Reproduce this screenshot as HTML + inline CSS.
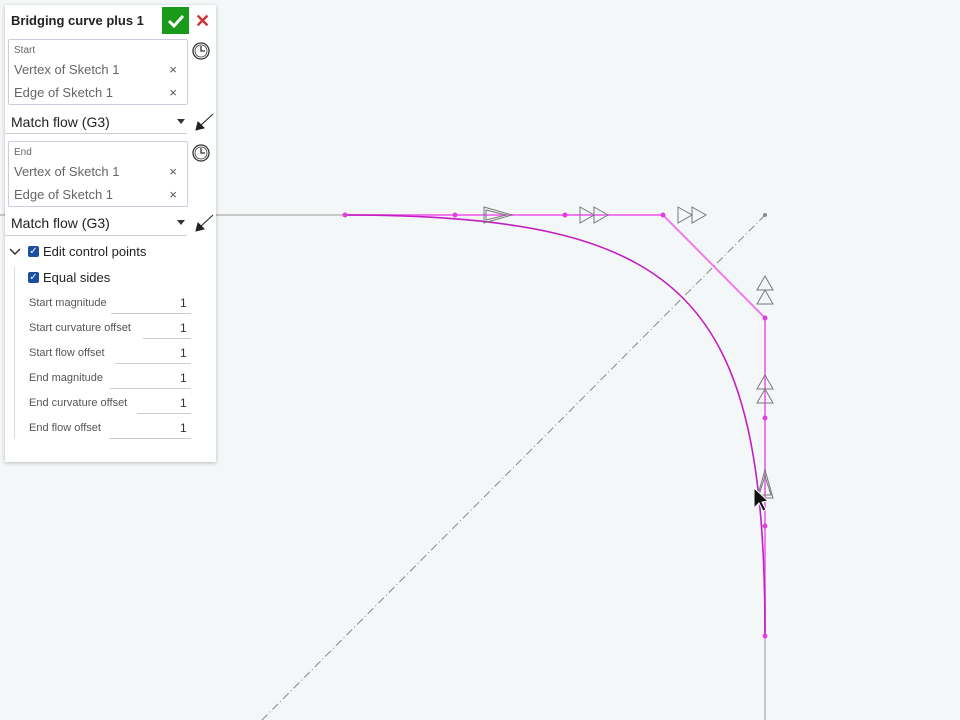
<!DOCTYPE html>
<html><head><style>
body{margin:0;width:960px;height:720px;background:#f4f7f8;font-family:"Liberation Sans",sans-serif;position:relative;overflow:hidden}
svg.bg{position:absolute;left:0;top:0}
.panel{position:absolute;left:5px;top:5px;width:211px;height:457px;background:#fff;box-shadow:0 1px 4px rgba(0,0,0,.25)}
.abs{position:absolute}
.t{font-size:13px;color:#222}
.g{color:#666}
.box{position:absolute;left:3px;width:178px;border:1px solid #ccd;border-radius:2px}
.x{position:absolute;right:10px;font-size:13px;color:#555}
.ul{position:absolute;border-bottom:1px solid #ccc}
.cb{position:absolute;width:11px;height:11px;background:#1b4fa0;border-radius:2px;color:#fff;font-size:10px;line-height:11px;text-align:center}
.lab{position:absolute;left:24px;font-size:11px;color:#555}
.val{position:absolute;font-size:12px;color:#333}
</style></head><body>
<svg class="bg" width="960" height="720">
<line x1="0" y1="215" x2="345" y2="215" stroke="#999" stroke-width="1"/>
<line x1="765" y1="636" x2="765" y2="720" stroke="#999"/>
<line x1="765" y1="215" x2="262" y2="720" stroke="#888" stroke-dasharray="8,3,1,3"/>
<circle cx="765" cy="215" r="2" fill="#888"/>
<polyline points="345,215 663,215 765,318 765,636" fill="none" stroke="#f27af0" stroke-width="2"/>
<path d="M345,215 C690,215 765,300 765,636" fill="none" stroke="#c21fc2" stroke-width="1.6"/>
<g fill="#e040e0"><circle cx="345" cy="215" r="2.5"/><circle cx="455" cy="215" r="2.5"/><circle cx="565" cy="215" r="2.5"/><circle cx="663" cy="215" r="2.5"/><circle cx="765" cy="318" r="2.5"/><circle cx="765" cy="418" r="2.5"/><circle cx="765" cy="526" r="2.5"/><circle cx="765" cy="636" r="2.5"/></g>
<g fill="none" stroke="#777" stroke-width="1">
<path d="M484,207 L512,215 L484,223Z M486,210 L506,215 L486,220Z"/>
<path d="M580,207 L594,215 L580,223Z M594,207 L608,215 L594,223Z"/>
<path d="M678,207 L692,215 L678,223Z M692,207 L706,215 L692,223Z"/>
<path d="M757,290 L765,276 L773,290Z M757,304 L765,290 L773,304Z"/>
<path d="M757,389 L765,375 L773,389Z M757,403 L765,389 L773,403Z"/>
<path d="M757,498 L765,470 L773,498Z M759,495 L765,476 L771,495Z"/>
</g>
<path d="M754,488 L754,508 L759,503 L763,511 L766,510 L762,502 L768,501Z" fill="#111" stroke="#fff" stroke-width="1"/>
</svg>
<div class="panel">
<div class="abs t" style="left:6px;top:8px;font-weight:bold;font-size:13px">Bridging curve plus 1</div>
<div class="abs" style="left:157px;top:2px;width:27px;height:27px;background:#1a9a1a"><svg width="27" height="27"><path d="M7,14 L12,19 L21,9" stroke="#fff" stroke-width="3" fill="none"/></svg></div>
<div class="abs" style="left:190px;top:6px;color:#c33;font-size:18px;font-weight:bold">✕</div>
<div class="box" style="top:34px;height:64px">
<div class="abs g" style="left:5px;top:5px;font-size:10px">Start</div>
<div class="abs g" style="left:5px;top:22px;font-size:13px">Vertex of Sketch 1</div><div class="x" style="top:22px">×</div>
<div class="abs g" style="left:5px;top:45px;font-size:13px">Edge of Sketch 1</div><div class="x" style="top:45px">×</div>
</div>
<svg class="abs" style="left:186px;top:36px" width="20" height="20"><circle cx="10" cy="10" r="8" fill="none" stroke="#333" stroke-width="1.3"/><circle cx="10" cy="10" r="6" fill="none" stroke="#333" stroke-width=".8"/><path d="M10,5 V10 H14" stroke="#333" fill="none" stroke-width="1.3"/></svg>
<div class="abs t" style="left:6px;top:109px;font-size:14px">Match flow (G3)</div>
<div class="abs" style="left:172px;top:114px;border:4px solid transparent;border-top:5px solid #333"></div>
<div class="ul" style="left:0px;top:128px;width:182px"></div>
<svg class="abs" style="left:188px;top:106px" width="22" height="22"><path d="M20,3 L8,14 L5,11 L3,19 L11,17 L8,14" fill="#222" stroke="#222"/></svg>
<div class="box" style="top:136px;height:64px">
<div class="abs g" style="left:5px;top:5px;font-size:10px">End</div>
<div class="abs g" style="left:5px;top:22px;font-size:13px">Vertex of Sketch 1</div><div class="x" style="top:22px">×</div>
<div class="abs g" style="left:5px;top:45px;font-size:13px">Edge of Sketch 1</div><div class="x" style="top:45px">×</div>
</div>
<svg class="abs" style="left:186px;top:138px" width="20" height="20"><circle cx="10" cy="10" r="8" fill="none" stroke="#333" stroke-width="1.3"/><circle cx="10" cy="10" r="6" fill="none" stroke="#333" stroke-width=".8"/><path d="M10,5 V10 H14" stroke="#333" fill="none" stroke-width="1.3"/></svg>
<div class="abs t" style="left:6px;top:210px;font-size:14px">Match flow (G3)</div>
<div class="abs" style="left:172px;top:215px;border:4px solid transparent;border-top:5px solid #333"></div>
<div class="ul" style="left:0px;top:230px;width:182px"></div>
<svg class="abs" style="left:188px;top:207px" width="22" height="22"><path d="M20,3 L8,14 L5,11 L3,19 L11,17 L8,14" fill="#222" stroke="#222"/></svg>
<svg class="abs" style="left:4px;top:242px" width="12" height="10"><path d="M1,2 L6,7 L11,2" stroke="#333" stroke-width="1.5" fill="none"/></svg>
<div class="abs" style="left:9px;top:262px;width:1px;height:172px;background:#ddd"></div>
<div class="cb" style="left:23px;top:241px">✓</div><div class="abs t" style="left:38px;top:239px">Edit control points</div>
<div class="cb" style="left:23px;top:267px">✓</div><div class="abs t" style="left:38px;top:265px">Equal sides</div>
<div class="lab" style="top:292px">Start magnitude</div><div class="ul" style="left:106px;top:308px;width:80px"></div><div class="val" style="left:175px;top:291px">1</div>
<div class="lab" style="top:317px">Start curvature offset</div><div class="ul" style="left:138px;top:333px;width:48px"></div><div class="val" style="left:175px;top:316px">1</div>
<div class="lab" style="top:342px">Start flow offset</div><div class="ul" style="left:110px;top:358px;width:76px"></div><div class="val" style="left:175px;top:341px">1</div>
<div class="lab" style="top:367px">End magnitude</div><div class="ul" style="left:105px;top:383px;width:81px"></div><div class="val" style="left:175px;top:366px">1</div>
<div class="lab" style="top:392px">End curvature offset</div><div class="ul" style="left:132px;top:408px;width:54px"></div><div class="val" style="left:175px;top:391px">1</div>
<div class="lab" style="top:417px">End flow offset</div><div class="ul" style="left:104px;top:433px;width:82px"></div><div class="val" style="left:175px;top:416px">1</div>
</div>
</body></html>
